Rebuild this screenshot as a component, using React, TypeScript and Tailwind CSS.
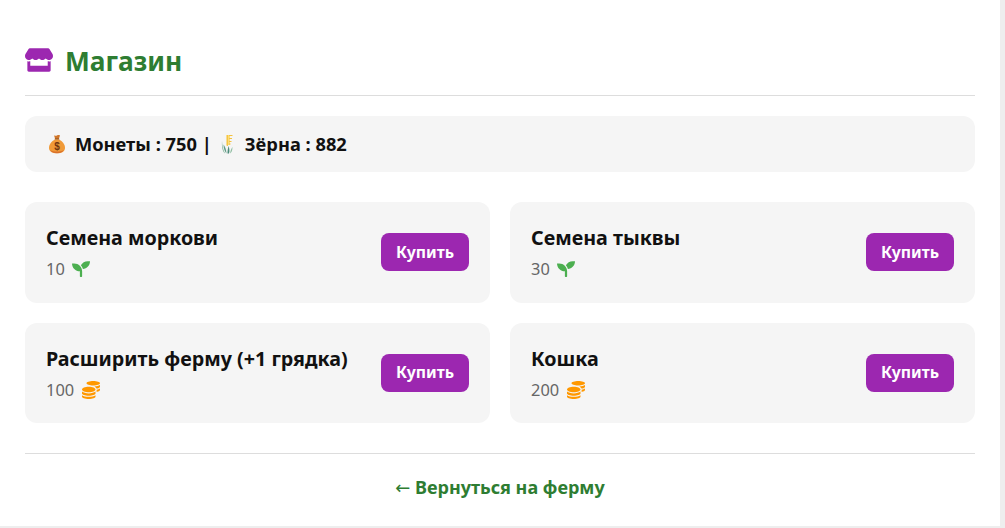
import { FaStore, FaSeedling, FaCoins } from "react-icons/fa";

function MoneyBag() {
  return (
    <svg width="18" height="20" viewBox="0 0 18 20" className="shrink-0">
      <path d="M6 1.200c1 .7 2 .7 3 .2 1-.5 2-.4 3 0L10.800 5H7.200z" fill="#d0762a" />
      <rect x="6.600" y="4.400" width="4.800" height="1.300" rx=".6" fill="#8a4a1c" />
      <path d="M7 5.600C3.500 7.500 1 10.500 1 13.800 1 17.500 4 19.300 9 19.300s8-1.800 8-5.500c0-3.300-2.500-6.300-6-8.200z" fill="#f09a38" />
      <path d="M2 16c1.500 2.300 4 3.300 7 3.300s5.500-1 7-3.300c-2 1-4.500 1.500-7 1.500s-5-.5-7-1.500z" fill="#d9702c" />
      <text x="9" y="16" textAnchor="middle" fontSize="10" fontWeight="700" fill="#6f3510" fontFamily="'Liberation Sans', sans-serif">$</text>
    </svg>
  );
}

function Corn() {
  return (
    <svg width="13" height="20" viewBox="0 0 13 20" className="shrink-0">
      <path d="M5.500 1h3.500v10H5.500z" fill="#fbdc7c" />
      <path d="M6.300 1v11M8 1.500h3.500M8 4.500h3M8 7.500h2.500M8 10h1.500" stroke="#f4c23e" strokeWidth="1.200" fill="none" />
      <path d="M5.500 19.500c-1.800-2-3-5-3-9 1.500 2 2.800 5 3 9z" fill="#5f9c86" />
      <path d="M6.500 19.500c0-3 .4-5 1.200-7.500.7 2.500 1 5 .3 7.500z" fill="#4a8a78" />
      <path d="M9 19.500c1.500-1 2.500-3 2.500-6.500-1.200 1.500-2 3.500-2.500 6.500z" fill="#8dbda0" />
      <path d="M1 7c.2 4 .8 8 3 12.500C1.800 18 .5 13 1 7z" fill="#7fb295" />
    </svg>
  );
}

type Item = { name: string; price: string; kind: "seed" | "coin" };
const items: Item[] = [
  { name: "Семена моркови", price: "10", kind: "seed" },
  { name: "Семена тыквы", price: "30", kind: "seed" },
  { name: "Расширить ферму (+1 грядка)", price: "100", kind: "coin" },
  { name: "Кошка", price: "200", kind: "coin" },
];

export default function App() {
  return (
    <div className="min-h-screen bg-[#eeeeee] font-['Noto_Sans','Open_Sans',sans-serif]">
      <div className="w-[1000px] h-[526px] bg-white px-[25px] pt-[44px]">
        <div className="flex items-center h-[34px] gap-[12px] text-[#2e7d32]">
          <FaStore className="text-[#9c27b0] w-[28px] h-[24px] -mt-[3px]" />
          <h1 className="text-[26.300px] font-bold leading-[34px]">Магазин</h1>
        </div>
        <div className="mt-[17px] border-t border-[#dddddd]" />
        <div className="mt-[20px] h-[56px] rounded-[12px] bg-[#f5f5f5] px-[23px] flex items-center text-[18.300px] font-bold text-[#111111]">
          <MoneyBag />
          <span className="ml-[9px]">Монеты : 750 |</span>
          <span className="ml-[9px] flex"><Corn /></span>
          <span className="ml-[11px]">Зёрна : 882</span>
        </div>
        <div className="mt-[30px] grid grid-cols-2 grid-rows-[100.900px_100px] gap-[20px]">
          {items.map((it) => (
            <div key={it.name} className="rounded-[12px] bg-[#f5f5f5] pl-[21px] pr-[21px] flex items-center justify-between">
              <div className="pt-[2px]">
                <div className="text-[19.700px] font-bold leading-[26px] text-[#111111]">{it.name}</div>
                <div className="mt-[6px] flex items-center gap-[7px] text-[16.400px] leading-[24px] text-[#666666]">
                  <span>{it.price}</span>
                  {it.kind === "seed" ? (
                    <FaSeedling className="text-[#4caf50] w-[20px] h-[18px] -ml-[1px]" />
                  ) : (
                    <FaCoins className="text-[#ff9800] w-[18px] h-[18px] ml-[1px]" />
                  )}
                </div>
              </div>
              <button className="w-[88px] h-[38px] rounded-[8px] bg-[#9c27b0] text-white text-[15.800px] font-bold">Купить</button>
            </div>
          ))}
        </div>
        <div className="mt-[30px] border-t border-[#dddddd]" />
        <div className="mt-[19px] text-center text-[18px] leading-[28px] font-bold text-[#2e7d32]">
          <span className="font-['DejaVu_Sans',sans-serif] font-normal">←</span> Вернуться на ферму
        </div>
      </div>
    </div>
  );
}
